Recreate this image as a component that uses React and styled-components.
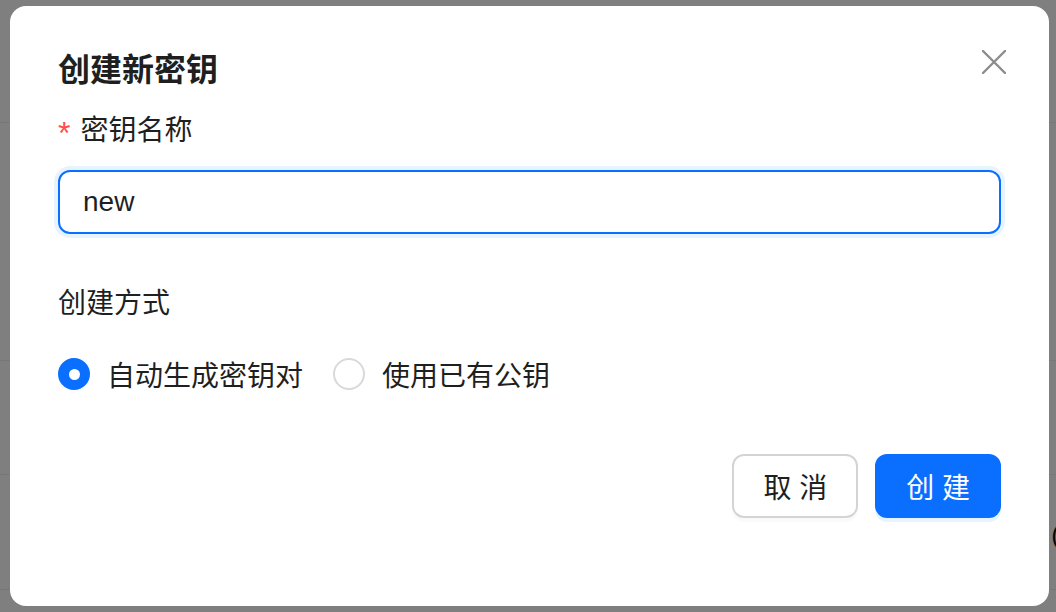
import React from "react";
import styled, { createGlobalStyle } from "styled-components";

const Global = createGlobalStyle`
  html, body { margin: 0; padding: 0; }
  body {
    width: 1056px;
    height: 612px;
    overflow: hidden;
    background: #ffffff;
    font-family: "Liberation Sans", "Noto Sans CJK SC", sans-serif;
  }
`;

const Page = styled.div`
  width: 1056px;
  height: 612px;
  display: flex;
  flex-direction: column;
  background: #fff;
`;

const PageRow = styled.div`
  height: ${(p) => p.h}px;
  border-bottom: 1px solid #eeeeee;
  display: flex;
  align-items: center;
  justify-content: flex-end;
  font-size: 26px;
  color: #111;
  box-sizing: border-box;
`;

const RowText = styled.span`
  margin-right: -4px;
  margin-top: 6px;
`;

const Mask = styled.div`
  position: fixed;
  inset: 0;
  background: rgba(0, 0, 0, 0.5);
`;

const Modal = styled.div`
  position: fixed;
  left: 10px;
  top: 6px;
  width: 1039px;
  height: 600px;
  box-sizing: border-box;
  background: #fff;
  border-radius: 16px;
  padding: 40px 48px;
  display: flex;
  flex-direction: column;
`;

const Title = styled.div`
  font-size: 32px;
  line-height: 48px;
  font-weight: 700;
  color: #1f1f1f;
  margin-bottom: 15px;
`;

const Close = styled.button`
  position: absolute;
  top: 44px;
  right: 43px;
  width: 24px;
  height: 24px;
  padding: 0;
  border: none;
  background: transparent;
  display: flex;
  color: #8c8c8c;
`;

const Label = styled.div`
  font-size: 28px;
  line-height: 44px;
  height: 44px;
  color: #1f1f1f;
  display: flex;
  align-items: center;
  margin-bottom: ${(p) => p.mb || 0}px;
`;

const Star = styled.span`
  color: #ff4d4f;
  font-size: 32px;
  line-height: 1;
  padding-top: 4px;
  margin-right: 10px;
  font-family: "Liberation Sans", sans-serif;
`;

const Input = styled.input`
  box-sizing: border-box;
  width: 100%;
  height: 64px;
  border: 2px solid #0a6fff;
  border-radius: 12px;
  box-shadow: 0 0 0 4px rgba(5, 145, 255, 0.1);
  padding: 0 23px;
  font-size: 28px;
  font-family: "Liberation Sans", "Noto Sans CJK SC", sans-serif;
  color: #1f1f1f;
  outline: none;
  margin-bottom: 48px;
`;

const RadioGroup = styled.div`
  display: flex;
  align-items: center;
  height: 44px;
  margin-top: 26px;
`;

const RadioItem = styled.label`
  display: flex;
  align-items: center;
  margin-right: 30px;
  font-size: 28px;
  color: #1f1f1f;
`;

const RadioCircle = styled.span`
  box-sizing: border-box;
  width: 32px;
  height: 32px;
  border-radius: 50%;
  margin-right: 17px;
  display: flex;
  align-items: center;
  justify-content: center;
  background: ${(p) => (p.checked ? "#0a6fff" : "#fff")};
  border: 2px solid ${(p) => (p.checked ? "#0a6fff" : "#d9d9d9")};
  &::after {
    content: "";
    width: 11px;
    height: 11px;
    border-radius: 50%;
    background: #fff;
    display: ${(p) => (p.checked ? "block" : "none")};
  }
`;

const Footer = styled.div`
  margin-top: 58px;
  display: flex;
  justify-content: flex-end;
  gap: 17px;
`;

const Button = styled.button`
  box-sizing: border-box;
  height: 64px;
  padding: 0 29px;
  border-radius: 12px;
  font-size: 28px;
  font-family: "Liberation Sans", "Noto Sans CJK SC", sans-serif;
  border: 2px solid ${(p) => (p.primary ? "#0a6fff" : "#d4d4d4")};
  background: ${(p) => (p.primary ? "#0a6fff" : "#fff")};
  color: ${(p) => (p.primary ? "#fff" : "#1f1f1f")};
  box-shadow: ${(p) =>
    p.primary ? "0 4px 0 rgba(5, 145, 255, 0.1)" : "0 4px 0 rgba(0, 0, 0, 0.02)"};
  white-space: pre;
`;

export default function App() {
  return (
    <>
      <Global />
      <Page>
        <PageRow h={123} />
        <PageRow h={238} />
        <PageRow h={114} />
        <PageRow h={115}>
          <RowText>(</RowText>
        </PageRow>
      </Page>
      <Mask />
      <Modal>
        <Title>创建新密钥</Title>
        <Close aria-label="close">
          <svg width="24" height="24" viewBox="0 0 24 24" fill="none">
            <path d="M1 1L23 23M23 1L1 23" stroke="currentColor" strokeWidth="2.4" strokeLinecap="round" />
          </svg>
        </Close>
        <Label mb={17}>
          <Star>*</Star>密钥名称
        </Label>
        <Input defaultValue="new" />
        <Label>创建方式</Label>
        <RadioGroup>
          <RadioItem>
            <RadioCircle checked />
            自动生成密钥对
          </RadioItem>
          <RadioItem>
            <RadioCircle />
            使用已有公钥
          </RadioItem>
        </RadioGroup>
        <Footer>
          <Button>取 消</Button>
          <Button primary>创 建</Button>
        </Footer>
      </Modal>
    </>
  );
}
